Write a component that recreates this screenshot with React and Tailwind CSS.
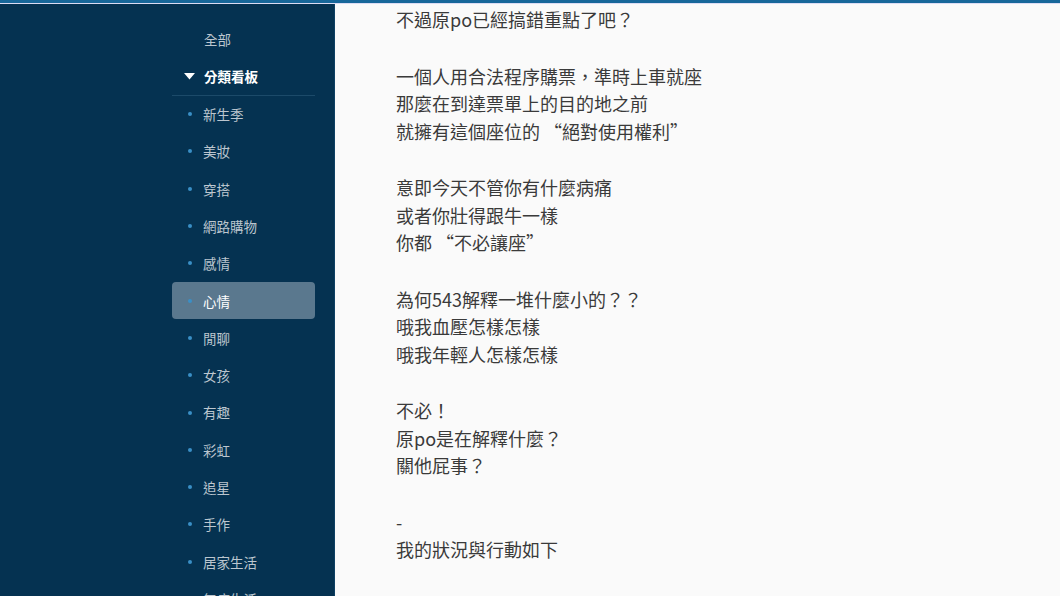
import { Fragment } from "react";

const boards = [
  "新生季",
  "美妝",
  "穿搭",
  "網路購物",
  "感情",
  "心情",
  "閒聊",
  "女孩",
  "有趣",
  "彩虹",
  "追星",
  "手作",
  "居家生活",
  "無痕生活",
];

const paragraphs = [
  ["不過原po已經搞錯重點了吧？"],
  ["一個人用合法程序購票，準時上車就座", "那麼在到達票單上的目的地之前", "就擁有這個座位的 “絕對使用權利”"],
  ["意即今天不管你有什麼病痛", "或者你壯得跟牛一樣", "你都 “不必讓座”"],
  ["為何543解釋一堆什麼小的？？", "哦我血壓怎樣怎樣", "哦我年輕人怎樣怎樣"],
  ["不必！", "原po是在解釋什麼？", "關他屁事？"],
  ["-", "我的狀況與行動如下"],
];

function Sidebar() {
  return (
    <aside className="w-[335px] shrink-0 bg-[#053251] border-r border-[#0e4063] flex justify-end pr-[19px]">
      <nav className="w-[143px] pt-[16.5px] text-[13.5px] text-[#bcc6cf]">
        <div className="h-[37px] flex items-center pl-[32px]">全部</div>
        <div className="h-[38px] flex items-center pl-[12px] gap-[9px] font-bold text-white border-b border-[#1c4a69]">
          <svg width="11" height="7" viewBox="0 0 11 7">
            <path d="M0 0H11L5.5 6.5Z" fill="#ffffff" />
          </svg>
          <span>分類看板</span>
        </div>
        {boards.map((b) => (
          <div
            key={b}
            className={
              b === "心情"
                ? "h-[37.3px] flex items-center pl-[16px] gap-[11px] rounded bg-[#5a788e] text-white"
                : "h-[37.3px] flex items-center pl-[16px] gap-[11px]"
            }
          >
            <span className="w-[4px] h-[4px] rounded-full bg-[#3a8fc6]" />
            <span>{b}</span>
          </div>
        ))}
      </nav>
    </aside>
  );
}

export default function App() {
  return (
    <div
      className="w-[1060px] h-[596px] overflow-hidden flex flex-col bg-[#fafafa]"
      style={{ fontFamily: '"Noto Sans CJK TC", "Noto Sans", sans-serif' }}
    >
      <div className="h-[3px] bg-[#17679a] shrink-0" />
      <div className="h-[1px] bg-[#dcdcf4] shrink-0" />
      <div className="flex flex-1 min-h-0">
        <Sidebar />
        <main className="flex-1 pl-[61px] pt-[2px] text-[18px] leading-[27.5px] text-[#3a3a3a]">
          {paragraphs.map((p, i) => (
            <div key={i} className="mb-[29px]">
              {p.map((line, j) => (
                <Fragment key={j}>
                  <div>{line}</div>
                </Fragment>
              ))}
            </div>
          ))}
        </main>
      </div>
    </div>
  );
}
